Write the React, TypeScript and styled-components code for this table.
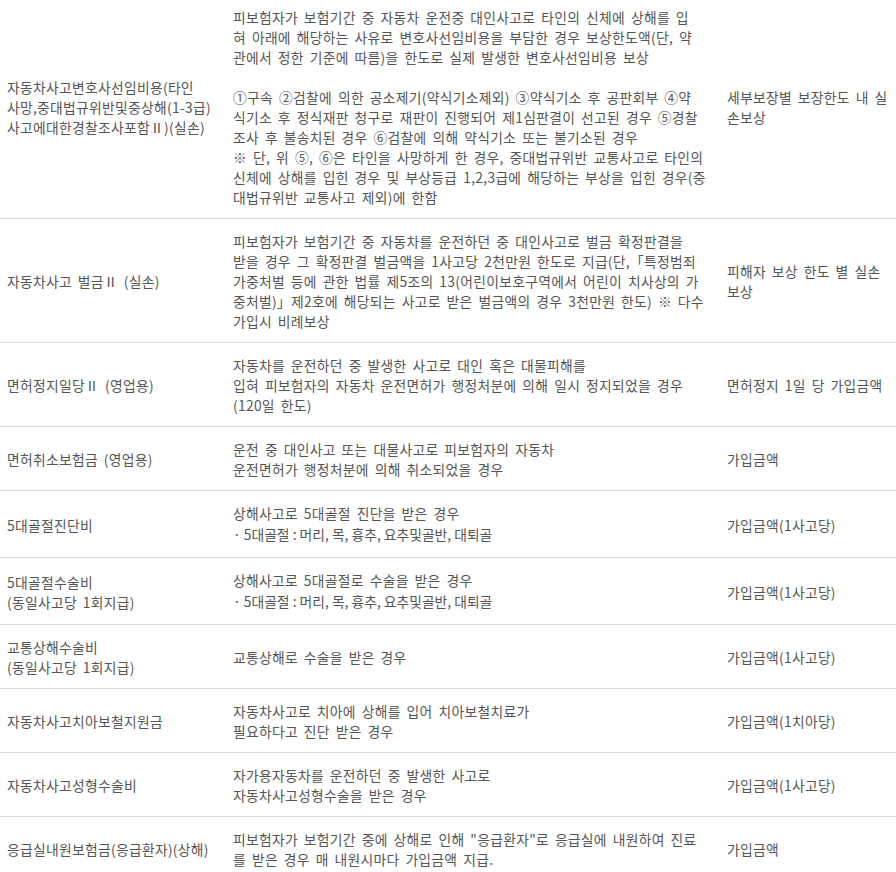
import React from "react";
import styled, { createGlobalStyle } from "styled-components";

const GlobalStyle = createGlobalStyle`
  html, body {
    margin: 0;
    padding: 0;
    background: #fff;
  }
  body {
    font-family: "Noto Sans CJK KR", "Noto Sans", sans-serif;
    color: #555;
  }
`;

const Wrap = styled.div`
  width: 896px;
  overflow: hidden;
  margin-top: -5px;
`;

const Table = styled.table`
  width: 100%;
  border-collapse: collapse;
  table-layout: fixed;
  font-size: 13.8px;
  line-height: 20px;
  letter-spacing: 0.3px;
  word-spacing: 2.5px;
`;

const Row = styled.tr`
  border-bottom: 1px solid #dddddd;
`;

const Cell = styled.td`
  padding: 12px 7px 11px;
  vertical-align: middle;
  text-align: left;
  white-space: nowrap;
`;

const Note = styled.span`
  display: block;
  line-height: 23px;
  letter-spacing: 0;
  word-spacing: 0;
`;

const Blank = styled.span`
  display: block;
  height: 20px;
`;

type Item = {
  name: React.ReactNode;
  desc: React.ReactNode;
  amount: React.ReactNode;
};

const lines = (...parts: string[]) =>
  parts.map((p, i) => (
    <React.Fragment key={i}>
      {i > 0 && <br />}
      {p}
    </React.Fragment>
  ));

const items: Item[] = [
  {
    name: lines(
      "자동차사고변호사선임비용(타인",
      "사망,중대법규위반및중상해(1-3급)",
      "사고에대한경찰조사포함Ⅱ)(실손)"
    ),
    desc: (
      <>
        {lines(
          "피보험자가 보험기간 중 자동차 운전중 대인사고로 타인의 신체에 상해를 입",
          "혀 아래에 해당하는 사유로 변호사선임비용을 부담한 경우 보상한도액(단, 약",
          "관에서 정한 기준에 따름)을 한도로 실제 발생한 변호사선임비용 보상"
        )}
        <Blank />
        {lines(
          "①구속 ②검찰에 의한 공소제기(약식기소제외) ③약식기소 후 공판회부 ④약",
          "식기소 후 정식재판 청구로 재판이 진행되어 제1심판결이 선고된 경우 ⑤경찰",
          "조사 후 불송치된 경우 ⑥검찰에 의해 약식기소 또는 불기소된 경우",
          "※ 단, 위 ⑤, ⑥은 타인을 사망하게 한 경우, 중대법규위반 교통사고로 타인의",
          "신체에 상해를 입힌 경우 및 부상등급 1,2,3급에 해당하는 부상을 입힌 경우(중",
          "대법규위반 교통사고 제외)에 한함"
        )}
      </>
    ),
    amount: lines("세부보장별 보장한도 내 실", "손보상"),
  },
  {
    name: "자동차사고 벌금Ⅱ (실손)",
    desc: lines(
      "피보험자가 보험기간 중 자동차를 운전하던 중 대인사고로 벌금 확정판결을",
      "받을 경우 그 확정판결 벌금액을 1사고당 2천만원 한도로 지급(단,「특정범죄",
      "가중처벌 등에 관한 법률 제5조의 13(어린이보호구역에서 어린이 치사상의 가",
      "중처벌)」제2호에 해당되는 사고로 받은 벌금액의 경우 3천만원 한도) ※ 다수",
      "가입시 비례보상"
    ),
    amount: lines("피해자 보상 한도 별 실손", "보상"),
  },
  {
    name: "면허정지일당Ⅱ (영업용)",
    desc: lines(
      "자동차를 운전하던 중 발생한 사고로 대인 혹은 대물피해를",
      "입혀 피보험자의 자동차 운전면허가 행정처분에 의해 일시 정지되었을 경우",
      "(120일 한도)"
    ),
    amount: "면허정지 1일 당 가입금액",
  },
  {
    name: "면허취소보험금 (영업용)",
    desc: lines(
      "운전 중 대인사고 또는 대물사고로 피보험자의 자동차",
      "운전면허가 행정처분에 의해 취소되었을 경우"
    ),
    amount: "가입금액",
  },
  {
    name: "5대골절진단비",
    desc: (
      <>
        상해사고로 5대골절 진단을 받은 경우
        <Note>· 5대골절 : 머리, 목, 흉추, 요추및골반, 대퇴골</Note>
      </>
    ),
    amount: "가입금액(1사고당)",
  },
  {
    name: lines("5대골절수술비", "(동일사고당 1회지급)"),
    desc: (
      <>
        상해사고로 5대골절로 수술을 받은 경우
        <Note>· 5대골절 : 머리, 목, 흉추, 요추및골반, 대퇴골</Note>
      </>
    ),
    amount: "가입금액(1사고당)",
  },
  {
    name: lines("교통상해수술비", "(동일사고당 1회지급)"),
    desc: "교통상해로 수술을 받은 경우",
    amount: "가입금액(1사고당)",
  },
  {
    name: "자동차사고치아보철지원금",
    desc: lines(
      "자동차사고로 치아에 상해를 입어 치아보철치료가",
      "필요하다고 진단 받은 경우"
    ),
    amount: "가입금액(1치아당)",
  },
  {
    name: "자동차사고성형수술비",
    desc: lines(
      "자가용자동차를 운전하던 중 발생한 사고로",
      "자동차사고성형수술을 받은 경우"
    ),
    amount: "가입금액(1사고당)",
  },
  {
    name: "응급실내원보험금(응급환자)(상해)",
    desc: lines(
      "피보험자가 보험기간 중에 상해로 인해 \"응급환자\"로 응급실에 내원하여 진료",
      "를 받은 경우 매 내원시마다 가입금액 지급."
    ),
    amount: "가입금액",
  },
];

const App = () => {
  return (
    <>
      <GlobalStyle />
      <Wrap>
        <Table>
          <colgroup>
            <col style={{ width: 226 }} />
            <col style={{ width: 494 }} />
            <col />
          </colgroup>
          <tbody>
            {items.map((item, i) => (
              <Row key={i}>
                <Cell>{item.name}</Cell>
                <Cell>{item.desc}</Cell>
                <Cell>{item.amount}</Cell>
              </Row>
            ))}
          </tbody>
        </Table>
      </Wrap>
    </>
  );
};

export default App;
